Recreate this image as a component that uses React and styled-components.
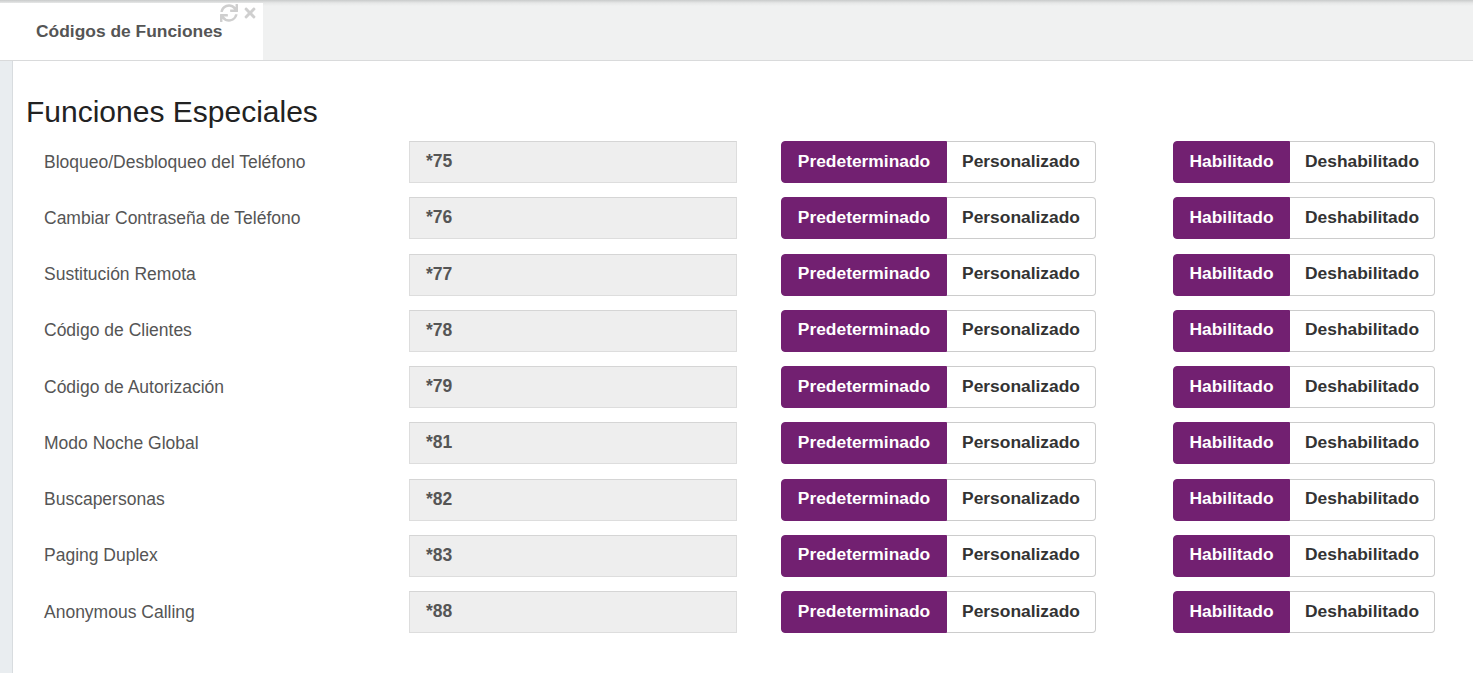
import React from "react";
import styled, { createGlobalStyle } from "styled-components";
import { FaSync, FaTimes } from "react-icons/fa";

const Global = createGlobalStyle`
  html, body { margin: 0; padding: 0; background: #fff; }
  body { font-family: "Liberation Sans", Arial, sans-serif; }
  * { box-sizing: border-box; }
`;

const Page = styled.div`
  display: flex;
  flex-direction: column;
  min-height: 673px;
`;

const TabBar = styled.div`
  height: 61px;
  display: flex;
  align-items: flex-end;
  background: linear-gradient(#c9cbcb 0px, #e6e7e7 3px, #f0f1f1 6px, #f0f1f1 100%);
  border-bottom: 1px solid #d9dadb;
`;

const Tab = styled.div`
  position: relative;
  width: 263px;
  height: 57px;
  background: #fff;
  display: flex;
  align-items: center;
  padding-left: 36px;
  padding-bottom: 1px;
  font-size: 17.4px;
  font-weight: bold;
  color: #555;
`;

const TabTools = styled.div`
  position: absolute;
  top: 1px;
  right: 5px;
  display: flex;
  gap: 4px;
  color: #cfcfcf;
  align-items: center;
`;

const Body = styled.div`
  flex: 1;
  display: flex;
`;

const SideStrip = styled.div`
  width: 13px;
  background: #e9edf0;
  border-right: 1px solid #d8dcdf;
`;

const Content = styled.div`
  flex: 1;
  padding: 34px 0 0 13px;
`;

const Heading = styled.h2`
  margin: 0 0 12px;
  font-size: 30px;
  font-weight: normal;
  color: #222;
  line-height: 34px;
`;

const Rows = styled.div`
  display: flex;
  flex-direction: column;
  gap: 14.25px;
`;

const Row = styled.div`
  display: grid;
  grid-template-columns: 365px 372px 392px 1fr;
  align-items: center;
  padding-left: 18px;
`;

const Label = styled.div`
  font-size: 17.5px;
  color: #555;
`;

const CodeBox = styled.div`
  width: 328px;
  height: 42px;
  background: #eee;
  border: 1px solid #ddd;
  border-top-color: #d5d5d5;
  display: flex;
  align-items: center;
  padding-left: 16px;
  padding-bottom: 1px;
  font-size: 17.5px;
  font-weight: bold;
  color: #555;
`;

const Group = styled.div`
  display: flex;
  height: 42px;
`;

const Seg = styled.div`
  width: ${(p) => p.$w}px;
  display: flex;
  align-items: center;
  justify-content: center;
  padding-bottom: 2px;
  font-size: 17.4px;
  font-weight: bold;
  background: ${(p) => (p.$active ? "#722071" : "#fff")};
  color: ${(p) => (p.$active ? "#fff" : "#333")};
  border: 1px solid ${(p) => (p.$active ? "#722071" : "#ccc")};
  &:first-child {
    border-radius: 4px 0 0 4px;
  }
  &:last-child {
    border-radius: 0 4px 4px 0;
    border-left: none;
  }
`;

const data = [
  ["Bloqueo/Desbloqueo del Teléfono", "*75"],
  ["Cambiar Contraseña de Teléfono", "*76"],
  ["Sustitución Remota", "*77"],
  ["Código de Clientes", "*78"],
  ["Código de Autorización", "*79"],
  ["Modo Noche Global", "*81"],
  ["Buscapersonas", "*82"],
  ["Paging Duplex", "*83"],
  ["Anonymous Calling", "*88"],
];

export default function App() {
  return (
    <Page>
      <Global />
      <TabBar>
        <Tab>
          Códigos de Funciones
          <TabTools>
            <FaSync size={18} />
            <FaTimes size={16} />
          </TabTools>
        </Tab>
      </TabBar>
      <Body>
        <SideStrip />
        <Content>
          <Heading>Funciones Especiales</Heading>
          <Rows>
            {data.map(([label, code]) => (
              <Row key={code}>
                <Label>{label}</Label>
                <CodeBox>{code}</CodeBox>
                <Group>
                  <Seg $active $w={166}>Predeterminado</Seg>
                  <Seg $w={149}>Personalizado</Seg>
                </Group>
                <Group>
                  <Seg $active $w={117}>Habilitado</Seg>
                  <Seg $w={145}>Deshabilitado</Seg>
                </Group>
              </Row>
            ))}
          </Rows>
        </Content>
      </Body>
    </Page>
  );
}
